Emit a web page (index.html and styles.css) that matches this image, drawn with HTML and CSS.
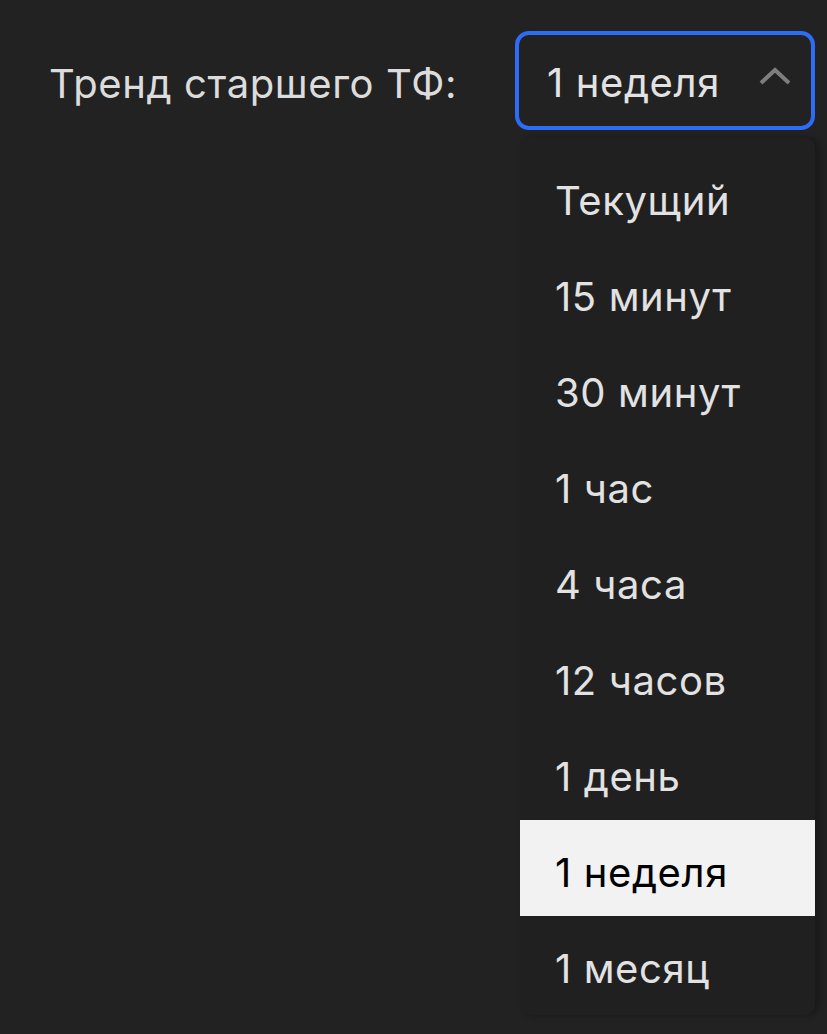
FILE: index.html
```html
<!DOCTYPE html>
<html lang="ru">
<head>
<meta charset="utf-8">
<link rel="stylesheet" href="styles.css">
</head>
<body>
<div class="row">
  <label class="label">Тренд старшего ТФ:</label>
  <div class="select-wrap">
    <div class="select">
      <span class="value">1 неделя</span>
      <svg class="chev" width="32" height="20" viewBox="0 0 32 20"><path d="M2 16 L16 3 L30 16" fill="none" stroke="#7e7e7e" stroke-width="4"/></svg>
    </div>
    <ul class="menu">
      <li>Текущий</li>
      <li>15 минут</li>
      <li>30 минут</li>
      <li>1 час</li>
      <li>4 часа</li>
      <li>12 часов</li>
      <li>1 день</li>
      <li class="active">1 неделя</li>
      <li>1 месяц</li>
    </ul>
  </div>
</div>
</body>
</html>
```
FILE: styles.css
```css
html, body { margin: 0; padding: 0; }
body {
  background: #222222;
  width: 827px;
  height: 1034px;
  overflow: hidden;
  font-family: Inter, "Noto Sans", sans-serif;
  color: #e2e2e2;
}
.row {
  display: flex;
  align-items: flex-start;
  padding: 31px 0 0 49px;
}
.label {
  font-size: 40px;
  color: #dcdcdc;
  width: 466px;
  line-height: 99px;
  padding-top: 3px;
  letter-spacing: 0.6px;
}
.select-wrap { position: relative; }
.select {
  box-sizing: border-box;
  width: 300px;
  height: 99px;
  border: 4px solid #2d6cf6;
  border-radius: 14px;
  display: flex;
  align-items: center;
  justify-content: space-between;
  padding: 5px 20px 0 28px;
}
.value { font-size: 40px; color: #e2e2e2; line-height: 1; letter-spacing: 0.6px; }
.chev { margin-top: -12px; }
.menu {
  position: absolute;
  left: 5px;
  top: 107px;
  width: 295px;
  margin: 0;
  padding: 10px 0 3px;
  list-style: none;
  background: #202020;
  border-radius: 10px;
  box-shadow: 4px 0 6px rgba(0,0,0,0.3);
}
.menu li {
  height: 91px;
  padding-top: 5px;
  line-height: 96px;
  padding-left: 35px;
  font-size: 40px;
  color: #e2e2e2;
  letter-spacing: 0.6px;
}
.menu li.active { background: #f2f2f2; color: #000; }
```
